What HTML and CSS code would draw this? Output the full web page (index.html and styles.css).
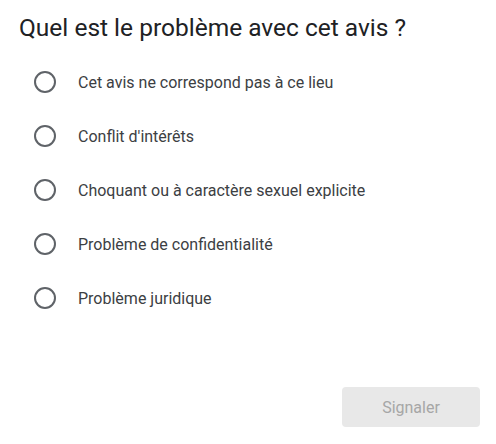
FILE: index.html
```html
<!DOCTYPE html>
<html lang="fr">
<head>
<meta charset="utf-8">
<link rel="stylesheet" href="styles.css">
</head>
<body>
<div class="dialog">
  <h1 class="title">Quel est le problème avec cet avis ?</h1>
  <ul class="options">
    <li class="option"><span class="radio"></span><span class="label">Cet avis ne correspond pas à ce lieu</span></li>
    <li class="option"><span class="radio"></span><span class="label">Conflit d'intérêts</span></li>
    <li class="option"><span class="radio"></span><span class="label">Choquant ou à caractère sexuel explicite</span></li>
    <li class="option"><span class="radio"></span><span class="label">Problème de confidentialité</span></li>
    <li class="option"><span class="radio"></span><span class="label">Problème juridique</span></li>
  </ul>
  <div class="actions">
    <button class="submit" disabled>Signaler</button>
  </div>
</div>
</body>
</html>
```
FILE: styles.css
```css
html, body {
  margin: 0;
  padding: 0;
  background: #ffffff;
}
body {
  font-family: Roboto, "Noto Sans", sans-serif;
  width: 496px;
  height: 444px;
  overflow: hidden;
}
.dialog {
  display: flex;
  flex-direction: column;
  height: 444px;
  box-sizing: border-box;
  padding: 12px 16px 16px 19px;
}
.title {
  margin: 0;
  font-size: 24.5px;
  font-weight: 400;
  line-height: 32px;
  color: #202124;
}
.options {
  list-style: none;
  margin: 11px 0 0 0;
  padding: 0 0 0 15px;
}
.option {
  display: flex;
  align-items: center;
  height: 54px;
}
.radio {
  width: 18px;
  height: 18px;
  border: 2px solid #5f6368;
  border-radius: 50%;
  flex: none;
}
.label {
  margin-left: 22px;
  font-size: 16px;
  color: #3c4043;
}
.actions {
  margin-top: auto;
  display: flex;
  justify-content: flex-end;
}
.submit {
  width: 138px;
  height: 40px;
  border: none;
  border-radius: 4px;
  background: #e8e8e8;
  color: #a6a6a6;
  font-family: Roboto, "Noto Sans", sans-serif;
  font-size: 16px;
  margin-bottom: 1px;
}
```
